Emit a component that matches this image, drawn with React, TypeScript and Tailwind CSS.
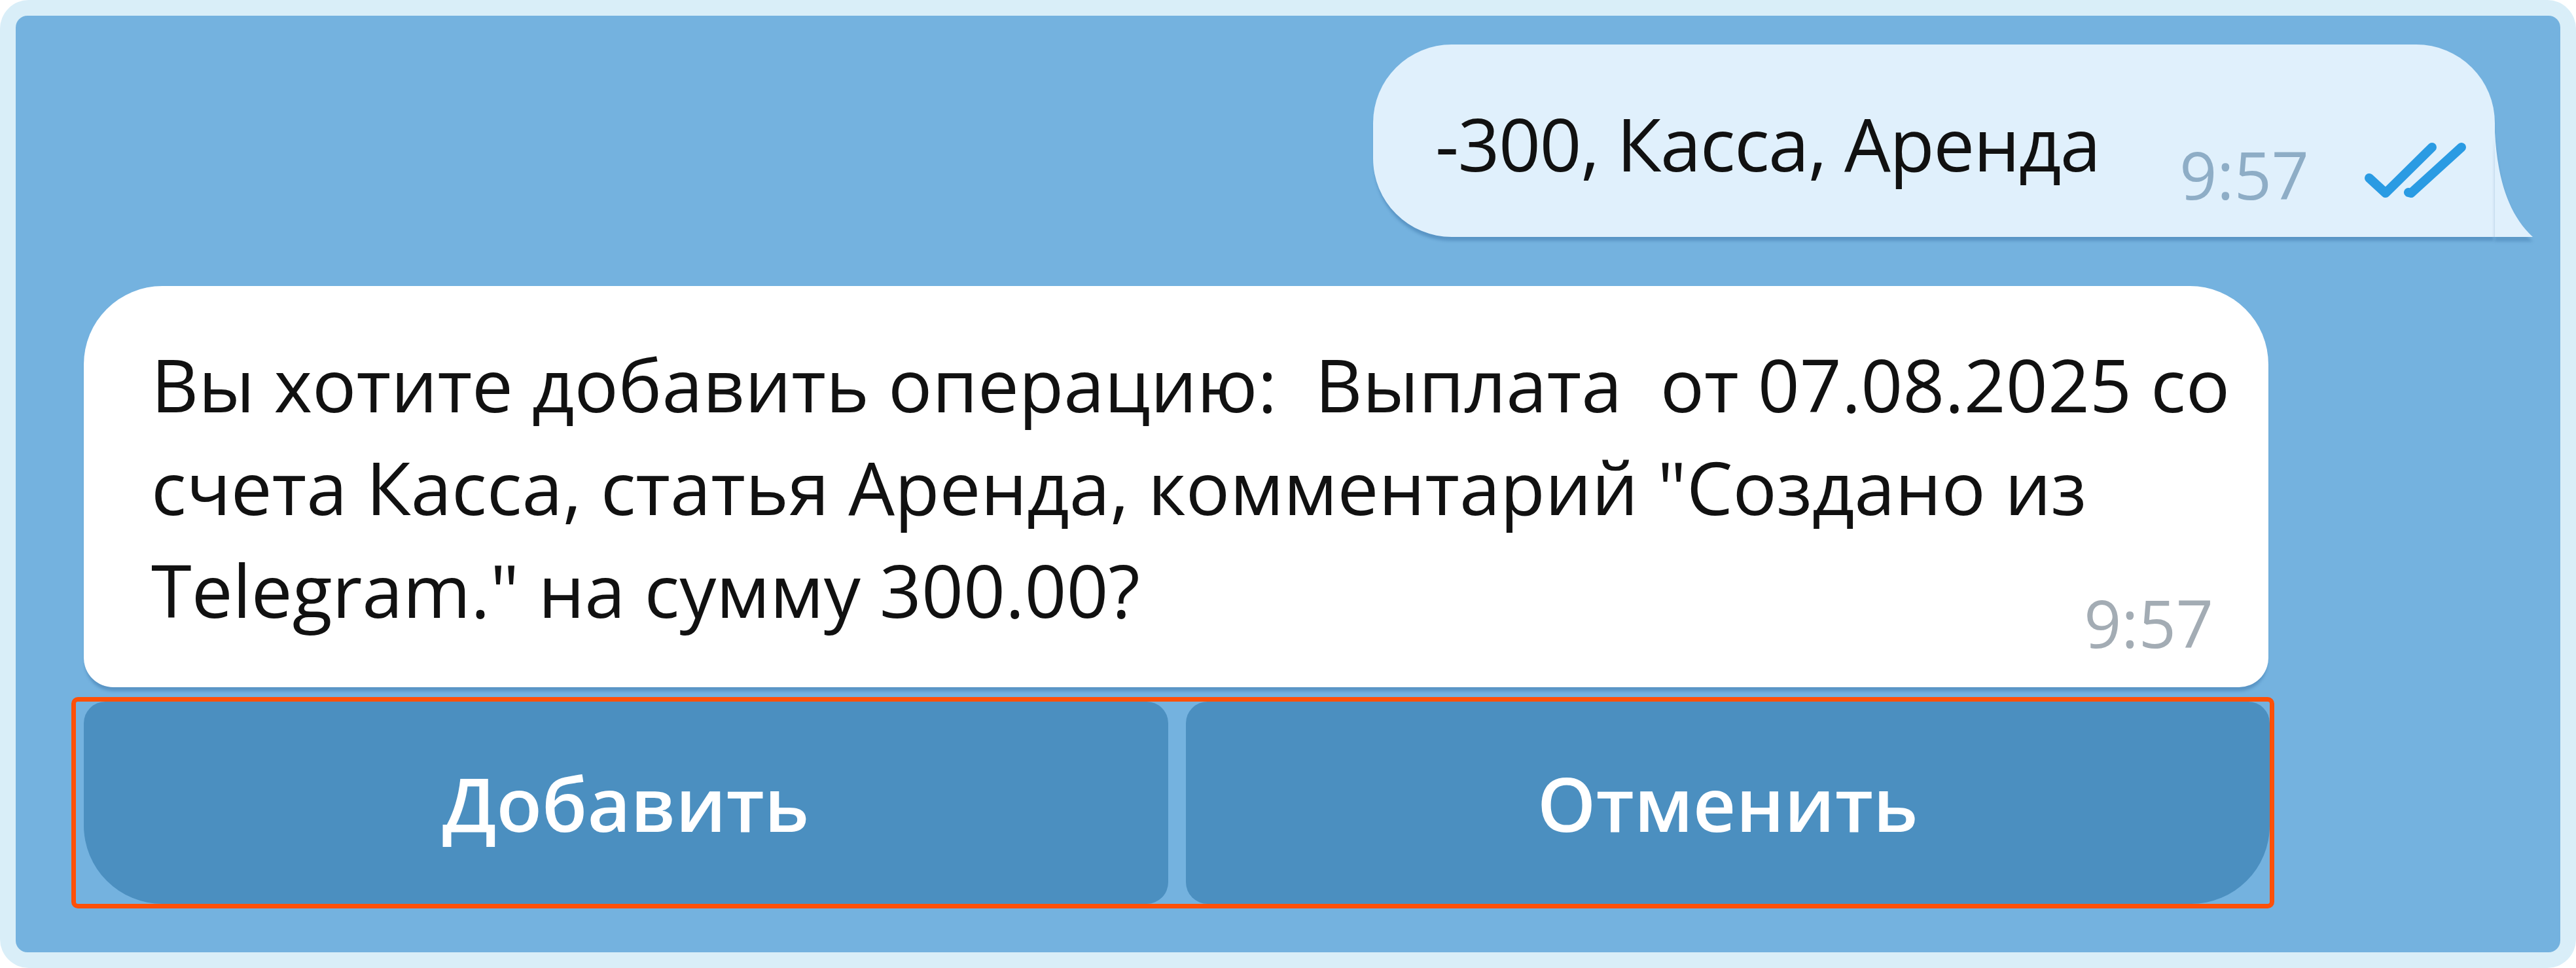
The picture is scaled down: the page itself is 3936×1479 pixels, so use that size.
import React from 'react';

const DoubleCheck: React.FC = () => (
  <svg width="160" height="92" viewBox="0 0 160 92" fill="none" className="mt-[75px] shrink-0">
    <path
      d="M12 57 L37 80 L108 10"
      stroke="#2a9be3"
      strokeWidth="14"
      strokeLinecap="round"
      strokeLinejoin="round"
    />
    <path d="M72 79 L76 80 L153 10" stroke="#2a9be3" strokeWidth="14" strokeLinecap="round" strokeLinejoin="round" />
  </svg>
);

const OutgoingMessage: React.FC = () => (
  <div className="self-end mr-[100px] relative w-[1714px] h-[294px] bg-[#e0f0fc] rounded-[120px] rounded-br-none shadow-[0_8px_4px_-2px_rgba(40,95,150,0.35)] flex items-start pt-[72px] pl-[95px] pr-[44px]">
    <div className="flex-1 text-[112px] leading-[157px] tracking-[-1.5px] text-[#111] whitespace-nowrap">
      -300, Касса, Аренда
    </div>
    <div className="mt-[76px] text-[100px] leading-[100px] text-[#8eadc6] mr-[80px]">9:57</div>
    <DoubleCheck />
    <svg
      width="62"
      height="160"
      viewBox="0 0 62 160"
      className="absolute left-full bottom-0 drop-shadow-[0_7px_2px_rgba(40,95,150,0.3)]"
    >
      <path d="M0 0 C4 70 20 125 58 160 L0 160 Z" fill="#e0f0fc" />
    </svg>
  </div>
);

const lines = [
  'Вы хотите добавить операцию:  Выплата  от 07.08.2025 со',
  'счета Касса, статья Аренда, комментарий "Создано из',
  'Telegram." на сумму 300.00?',
];

const IncomingMessage: React.FC = () => (
  <div className="ml-[104px] mt-[75px] w-[3338px] bg-white rounded-t-[120px] rounded-b-[45px] shadow-[0_8px_4px_-2px_rgba(40,95,150,0.35)] pt-[71px] pl-[103px] pr-[84px] pb-[49px] flex flex-col">
    {lines.map((line) => (
      <div key={line} className="text-[112px] leading-[157px] text-[#111] whitespace-pre">
        {line}
      </div>
    ))}
    <div className="self-end -mt-[78px] text-[100px] leading-[100px] text-[#a3acb4]">9:57</div>
  </div>
);

const Keyboard: React.FC = () => (
  <div className="ml-[85px] mt-[15px] w-[3366px] border-[7px] border-[#ff5008] rounded-[10px] pl-[12px] grid grid-cols-2 gap-[27px]">
    <button className="h-[309px] bg-[#4b8fc0] rounded-[33px] rounded-bl-[120px] text-white text-[114px] font-semibold">
      Добавить
    </button>
    <button className="h-[309px] bg-[#4b8fc0] rounded-[33px] rounded-br-[120px] text-white text-[114px] font-semibold">
      Отменить
    </button>
  </div>
);

export default function App() {
  return (
    <div className="w-[3936px] h-[1479px] bg-[#d9eef8] rounded-[44px] p-[24px] font-['Open_Sans',sans-serif]">
      <div className="h-full bg-[#74b2df] rounded-[18px] flex flex-col pt-[44px]">
        <OutgoingMessage />
        <IncomingMessage />
        <Keyboard />
      </div>
    </div>
  );
}
